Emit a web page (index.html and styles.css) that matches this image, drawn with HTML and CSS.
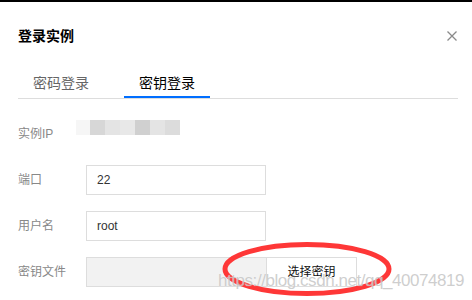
FILE: index.html
```html
<!DOCTYPE html>
<html lang="zh-CN">
<head>
<meta charset="utf-8">
<title>登录实例</title>
<link rel="stylesheet" href="styles.css">
</head>
<body>
<div class="topbar"></div>
<div class="dialog">
  <div class="header">
    <div class="title">登录实例</div>
    <svg class="close" width="10" height="10" viewBox="0 0 10 10"><path d="M0.5 0.5 L9.5 9.5 M9.5 0.5 L0.5 9.5" stroke="#8a8a8a" stroke-width="1.3" fill="none"/></svg>
  </div>
  <div class="tabs">
    <div class="tab">密码登录</div>
    <div class="tab active">密钥登录</div>
  </div>
  <div class="form">
    <div class="row row-ip">
      <div class="label label-ip">实例IP</div>
      <div class="ip-blur">
        <span class="b1"></span><span class="b2"></span><span class="b3"></span><span class="b4"></span><span class="b5"></span><span class="b6"></span><span class="b7"></span>
      </div>
    </div>
    <div class="row">
      <div class="label">端口</div>
      <div class="input">22</div>
    </div>
    <div class="row">
      <div class="label">用户名</div>
      <div class="input">root</div>
    </div>
    <div class="row">
      <div class="label">密钥文件</div>
      <div class="input input-file"></div>
      <div class="btn">选择密钥</div>
    </div>
  </div>
</div>
<svg class="mark" width="180" height="62" viewBox="0 0 180 62"><ellipse cx="87" cy="28" rx="82" ry="24.5" fill="none" stroke="#fe3737" stroke-width="5"/></svg>
<div class="watermark">https://blog.csdn.net/qq_40074819</div>
</body>
</html>
```
FILE: styles.css
```css
html, body {
  margin: 0;
  padding: 0;
  background: #fff;
}
body {
  width: 472px;
  height: 300px;
  overflow: hidden;
  position: relative;
  font-family: "Liberation Sans", "Noto Sans CJK SC", sans-serif;
  font-size: 12px;
  color: #333;
}
.topbar {
  height: 2px;
  background: #000;
}
.dialog {
  padding: 0 14px 0 18px;
}
.header {
  display: flex;
  align-items: center;
  justify-content: space-between;
  padding-top: 24px;
  height: 20px;
}
.title {
  font-size: 14px;
  line-height: 20px;
  font-weight: bold;
  color: #000;
}
.close {
  margin-right: 1px;
  margin-top: -1px;
}
.tabs {
  display: flex;
  gap: 20px;
  margin-top: 16px;
  border-bottom: 1px solid #dddddd;
}
.tab {
  padding: 11px 15px 3px;
  font-size: 14px;
  line-height: 20px;
  color: #666;
  border-bottom: 2px solid transparent;
}
.tab.active {
  color: #000;
  border-bottom-color: #006eff;
}
.form {
  padding-top: 21px;
  display: flex;
  flex-direction: column;
  gap: 16px;
}
.row {
  display: flex;
  align-items: center;
}
.row-ip {
  align-items: flex-start;
  height: 29px;
}
.label {
  width: 68px;
  color: #888;
  line-height: 20px;
}
.label-ip {
  width: 58px;
  padding-top: 4px;
}
.ip-blur {
  display: flex;
  height: 15px;
}
.ip-blur span {
  width: 15px;
  height: 15px;
}
.b1 { background: #f6f6f6; width: 14px !important; }
.b2 { background: #d7d7d7; }
.b3 { background: #e4e4e4; }
.b4 { background: #e8e8e8; }
.b5 { background: #d0d0d0; }
.b6 { background: #e4e4e4; }
.b7 { background: #dcdcdc; }
.input {
  box-sizing: border-box;
  width: 180px;
  height: 30px;
  border: 1px solid #dddddd;
  padding-left: 10px;
  line-height: 28px;
  color: #333;
}
.input-file {
  width: 181px;
  background: #f2f2f2;
}
.btn {
  box-sizing: border-box;
  width: 90px;
  height: 30px;
  border: 1px solid #dddddd;
  border-left: none;
  background: #fff;
  color: #111;
  line-height: 28px;
  text-align: center;
}
.mark {
  position: absolute;
  left: 220px;
  top: 241px;
}
.watermark {
  position: absolute;
  left: 218px;
  top: 271px;
  font-family: "Liberation Sans", sans-serif;
  font-size: 17px;
  letter-spacing: -0.45px;
  color: rgba(190, 190, 190, 0.75);
  text-shadow: 0 0 1px rgba(255, 255, 255, 0.6);
  white-space: nowrap;
}
```
